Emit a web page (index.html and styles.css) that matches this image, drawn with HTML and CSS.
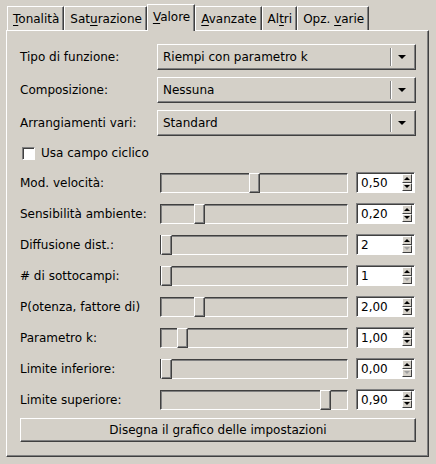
FILE: index.html
```html
<!DOCTYPE html>
<html>
<head>
<meta charset="utf-8">
<link rel="stylesheet" href="styles.css">
</head>
<body>
<div class="win">
  <div class="tabs">
    <div class="tab"><span><u>T</u>onalità</span></div>
    <div class="tab"><span>Sat<u>u</u>razione</span></div>
    <div class="tab active"><span><u>V</u>alore</span></div>
    <div class="tab"><span><u>A</u>vanzate</span></div>
    <div class="tab"><span>Al<u>t</u>ri</span></div>
    <div class="tab"><span>Opz. <u>v</u>arie</span></div>
  </div>
  <div class="panel">
    <div class="row combo-row">
      <span class="label">Tipo di funzione:</span>
      <div class="combo"><span class="combo-text">Riempi con parametro k</span><span class="combo-sep"></span><span class="combo-arrow"></span></div>
    </div>
    <div class="row combo-row">
      <span class="label">Composizione:</span>
      <div class="combo"><span class="combo-text">Nessuna</span><span class="combo-sep"></span><span class="combo-arrow"></span></div>
    </div>
    <div class="row combo-row">
      <span class="label">Arrangiamenti vari:</span>
      <div class="combo"><span class="combo-text">Standard</span><span class="combo-sep"></span><span class="combo-arrow"></span></div>
    </div>
    <div class="row check-row">
      <span class="checkbox"></span><span>Usa campo ciclico</span>
    </div>

    <div class="row slider-row">
      <span class="label">Mod. velocità:</span>
      <div class="trough"><span class="thumb" style="margin-left:88px"></span></div>
      <div class="spin"><span class="spin-text">0,50</span><div class="spin-btns"><span class="sb up"></span><span class="sb down"></span></div></div>
    </div>
    <div class="row slider-row">
      <span class="label">Sensibilità ambiente:</span>
      <div class="trough"><span class="thumb" style="margin-left:33px"></span></div>
      <div class="spin"><span class="spin-text">0,20</span><div class="spin-btns"><span class="sb up"></span><span class="sb down"></span></div></div>
    </div>
    <div class="row slider-row">
      <span class="label">Diffusione dist.:</span>
      <div class="trough"><span class="thumb" style="margin-left:0px"></span></div>
      <div class="spin"><span class="spin-text">2</span><div class="spin-btns"><span class="sb up"></span><span class="sb down dis"></span></div></div>
    </div>
    <div class="row slider-row">
      <span class="label"># di sottocampi:</span>
      <div class="trough"><span class="thumb" style="margin-left:0px"></span></div>
      <div class="spin"><span class="spin-text">1</span><div class="spin-btns"><span class="sb up"></span><span class="sb down dis"></span></div></div>
    </div>
    <div class="row slider-row">
      <span class="label">P(otenza, fattore di)</span>
      <div class="trough"><span class="thumb" style="margin-left:33px"></span></div>
      <div class="spin"><span class="spin-text">2,00</span><div class="spin-btns"><span class="sb up"></span><span class="sb down"></span></div></div>
    </div>
    <div class="row slider-row">
      <span class="label">Parametro k:</span>
      <div class="trough"><span class="thumb" style="margin-left:16px"></span></div>
      <div class="spin"><span class="spin-text">1,00</span><div class="spin-btns"><span class="sb up"></span><span class="sb down"></span></div></div>
    </div>
    <div class="row slider-row">
      <span class="label">Limite inferiore:</span>
      <div class="trough"><span class="thumb" style="margin-left:0px"></span></div>
      <div class="spin"><span class="spin-text">0,00</span><div class="spin-btns"><span class="sb up"></span><span class="sb down dis"></span></div></div>
    </div>
    <div class="row slider-row">
      <span class="label">Limite superiore:</span>
      <div class="trough"><span class="thumb" style="margin-left:159px"></span></div>
      <div class="spin"><span class="spin-text">0,90</span><div class="spin-btns"><span class="sb up"></span><span class="sb down"></span></div></div>
    </div>

    <div class="button">Disegna il grafico delle impostazioni</div>
  </div>
</div>
</body>
</html>
```

FILE: styles.css
```css
* { box-sizing: border-box; }
html, body {
  margin: 0;
  padding: 0;
  background: #d4d0c8;
  width: 436px;
  height: 464px;
  overflow: hidden;
}
body {
  font-family: "DejaVu Sans", sans-serif;
  font-size: 12px;
  color: #000;
}
u { text-decoration: underline; text-underline-offset: 2px; }

.win {
  padding: 4px 0 0 6px;
}

.tabs {
  display: flex;
  align-items: flex-end;
  height: 26px;
  padding-left: 1px;
  position: relative;
  z-index: 2;
}
.tab {
  height: 24px;
  padding: 0 4px 0 5px;
  display: flex;
  align-items: center;
  white-space: pre;
  border-top: 1px solid #fff;
  border-left: 1px solid #fff;
  border-right: 1px solid #404040;
  box-shadow: inset -1px 0 0 #808080;
  background: #d4d0c8;
}
.tab.active {
  height: 27px;
  margin-bottom: -1px;
  padding-bottom: 3px;
}

.panel {
  width: 423px;
  height: 427px;
  border-top: 1px solid #fff;
  border-left: 1px solid #fff;
  border-right: 1px solid #404040;
  border-bottom: 1px solid #404040;
  box-shadow: inset -1px -1px 0 #808080;
  padding: 13px 0 0 13px;
  display: flex;
  flex-direction: column;
}

.row {
  display: flex;
  align-items: center;
}
.label {
  width: 137px;
  flex: none;
  white-space: nowrap;
}

.combo-row {
  height: 26px;
  margin-bottom: 7px;
}
.combo {
  width: 259px;
  height: 26px;
  display: flex;
  align-items: center;
  border-top: 1px solid #fff;
  border-left: 1px solid #fff;
  border-right: 1px solid #404040;
  border-bottom: 1px solid #404040;
  box-shadow: inset -1px -1px 0 #808080;
  padding-left: 5px;
}
.combo-text { flex: 1; }
.combo-sep {
  width: 2px;
  height: 18px;
  border-left: 1px solid #808080;
  border-right: 1px solid #fff;
  margin-right: 6px;
}
.combo-arrow {
  width: 0;
  height: 0;
  border-left: 4px solid transparent;
  border-right: 4px solid transparent;
  border-top: 4px solid #000;
  margin-right: 9px;
}

.check-row {
  height: 20px;
  margin-bottom: 9px;
  padding-left: 2px;
}
.checkbox {
  width: 13px;
  height: 13px;
  background: #fff;
  border-top: 1px solid #808080;
  border-left: 1px solid #808080;
  border-right: 1px solid #fff;
  border-bottom: 1px solid #fff;
  box-shadow: inset 1px 1px 0 #404040;
  margin-right: 6px;
}

.slider-row {
  height: 21px;
  margin-bottom: 10px;
}
.slider-row .label { width: 140px; }
.trough {
  width: 188px;
  height: 20px;
  display: flex;
  border-top: 1px solid #404040;
  border-left: 1px solid #404040;
  border-right: 1px solid #fff;
  border-bottom: 1px solid #fff;
  box-shadow: inset 1px 1px 0 #808080;
  margin-right: 8px;
  flex: none;
}
.thumb {
  width: 11px;
  height: 20px;
  margin-top: -1px;
  margin-left: -1px;
  flex: none;
  background: #d4d0c8;
  border-top: 1px solid #fff;
  border-left: 1px solid #fff;
  border-right: 1px solid #404040;
  border-bottom: 1px solid #404040;
  box-shadow: inset -1px -1px 0 #808080;
}
.spin {
  width: 59px;
  height: 21px;
  background: #fff;
  display: flex;
  align-items: center;
  border-top: 1px solid #808080;
  border-left: 1px solid #808080;
  border-right: 1px solid #fff;
  border-bottom: 1px solid #fff;
  box-shadow: inset 1px 1px 0 #404040;
  padding-left: 4px;
  padding-right: 2px;
}
.spin-text { flex: 1; padding-top: 1px; }
.spin-btns {
  display: flex;
  flex-direction: column;
  width: 10px;
  height: 17px;
}
.sb {
  flex: 1;
  background: #d4d0c8;
  border-top: 1px solid #fff;
  border-left: 1px solid #fff;
  border-right: 1px solid #404040;
  border-bottom: 1px solid #404040;
  display: flex;
  align-items: center;
  justify-content: center;
}
.sb::after {
  content: "";
  width: 0;
  height: 0;
  border-left: 3px solid transparent;
  border-right: 3px solid transparent;
}
.sb.up::after { border-bottom: 3px solid #000; }
.sb.down::after { border-top: 3px solid #000; }
.sb.down.dis::after { border-top-color: #a0a0a0; }

.button {
  width: 396px;
  height: 24px;
  margin-top: -2px;
  display: flex;
  align-items: center;
  justify-content: center;
  border-top: 1px solid #fff;
  border-left: 1px solid #fff;
  border-right: 1px solid #404040;
  border-bottom: 1px solid #404040;
  box-shadow: inset -1px -1px 0 #808080;
}
```
